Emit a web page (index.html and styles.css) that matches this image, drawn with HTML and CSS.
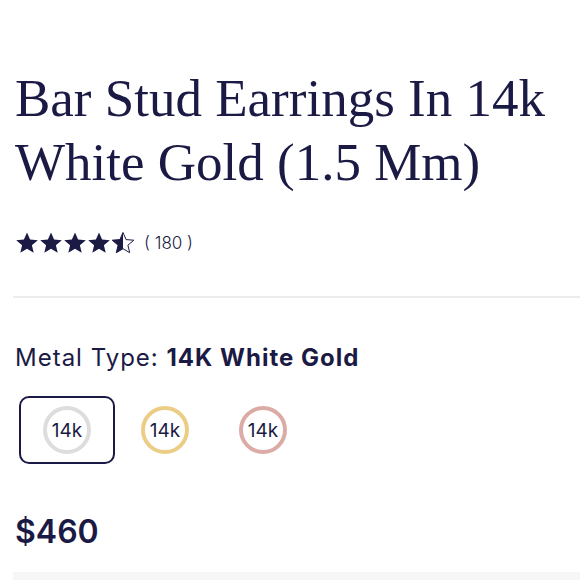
FILE: index.html
```html
<!DOCTYPE html>
<html lang="en">
<head>
    <meta charset="UTF-8">
    <meta name="viewport" content="width=device-width, initial-scale=1.0">
    <title>Bar Stud Earrings In 14k White Gold</title>
    <link rel="stylesheet" href="styles.css">
</head>
<body>
    <div class="product">
        <h1 class="title">Bar Stud Earrings In 14k White Gold (1.5 Mm)</h1>

        <div class="rating">
            <div class="stars">
                <svg class="star" viewBox="0 0 24 24"><path d="M12 1.5l3.1 7.1 7.7.6-5.9 5 1.8 7.5L12 17.7l-6.7 4 1.8-7.5-5.9-5 7.7-.6z"/></svg>
                <svg class="star" viewBox="0 0 24 24"><path d="M12 1.5l3.1 7.1 7.7.6-5.9 5 1.8 7.5L12 17.7l-6.7 4 1.8-7.5-5.9-5 7.7-.6z"/></svg>
                <svg class="star" viewBox="0 0 24 24"><path d="M12 1.5l3.1 7.1 7.7.6-5.9 5 1.8 7.5L12 17.7l-6.7 4 1.8-7.5-5.9-5 7.7-.6z"/></svg>
                <svg class="star" viewBox="0 0 24 24"><path d="M12 1.5l3.1 7.1 7.7.6-5.9 5 1.8 7.5L12 17.7l-6.7 4 1.8-7.5-5.9-5 7.7-.6z"/></svg>
                <svg class="star" viewBox="0 0 24 24">
                    <path class="star-outline" d="M12 1.5l3.1 7.1 7.7.6-5.9 5 1.8 7.5L12 17.7l-6.7 4 1.8-7.5-5.9-5 7.7-.6z"/>
                    <path d="M12 1.5V17.7l-6.7 4 1.8-7.5-5.9-5 7.7-.6z"/>
                </svg>
            </div>
            <span class="count">( 180 )</span>
        </div>

        <hr class="divider">

        <div class="option">
            <p class="option-label">Metal Type: <strong>14K White Gold</strong></p>
            <div class="swatches">
                <button class="swatch selected"><span class="ring white">14k</span></button>
                <button class="swatch"><span class="ring yellow">14k</span></button>
                <button class="swatch"><span class="ring rose">14k</span></button>
            </div>
        </div>

        <p class="price">$460</p>

        <div class="panel"></div>
    </div>
</body>
</html>
```

FILE: styles.css
```css
/* Page reset */
body {
    margin: 0;
    padding: 0;
    background-color: #ffffff;
    color: #1b1a45;
    font-family: Inter, "Noto Sans", sans-serif;
    overflow: hidden;
    height: 580px;
}

.product {
    padding: 66px 0 0 15px;
}

/* Product title */
.title {
    margin: 0;
    font-family: "Liberation Serif", serif;
    font-weight: normal;
    font-size: 53px;
    line-height: 64px;
    color: #1b1a45;
    padding-right: 10px;
}

/* Rating row */
.rating {
    display: flex;
    align-items: center;
    gap: 9px;
    margin-top: 37px;
    height: 24px;
}

.stars {
    display: flex;
}

.star {
    width: 24px;
    height: 24px;
    fill: #1b1a45;
}

.star-outline {
    fill: none;
    stroke: #1b1a45;
    stroke-width: 1;
}

.count {
    font-size: 17px;
    font-weight: 300;
}

.divider {
    border: none;
    border-top: 2px solid #ececec;
    margin: 41px 0 0 -2px;
}

/* Metal type selector */
.option-label {
    margin: 46px 0 0;
    font-size: 24px;
    line-height: 28px;
    letter-spacing: 1px;
}

.option-label strong {
    font-weight: 700;
}

.swatches {
    display: flex;
    gap: 2px;
    margin: 24px 0 0 4px;
}

.swatch {
    width: 96px;
    height: 68px;
    display: flex;
    align-items: center;
    justify-content: center;
    background: none;
    border: 2px solid transparent;
    border-radius: 10px;
    padding: 0;
    cursor: pointer;
}

.swatch.selected {
    border-color: #1b1a45;
}

.ring {
    width: 40px;
    height: 40px;
    border-radius: 50%;
    border: 4px solid #dddddd;
    display: flex;
    align-items: center;
    justify-content: center;
    font-family: Inter, "Noto Sans", sans-serif;
    font-size: 19px;
    color: #1b1a45;
}

.ring.yellow {
    border-color: #ebcd86;
}

.ring.rose {
    border-color: #ddaba6;
}

/* Price */
.price {
    margin: 48px 0 0;
    font-size: 32px;
    font-weight: 600;
    line-height: 40px;
}

.panel {
    margin: 20px 0 0 -2px;
    height: 40px;
    background-color: #f6f6f6;
}
```
